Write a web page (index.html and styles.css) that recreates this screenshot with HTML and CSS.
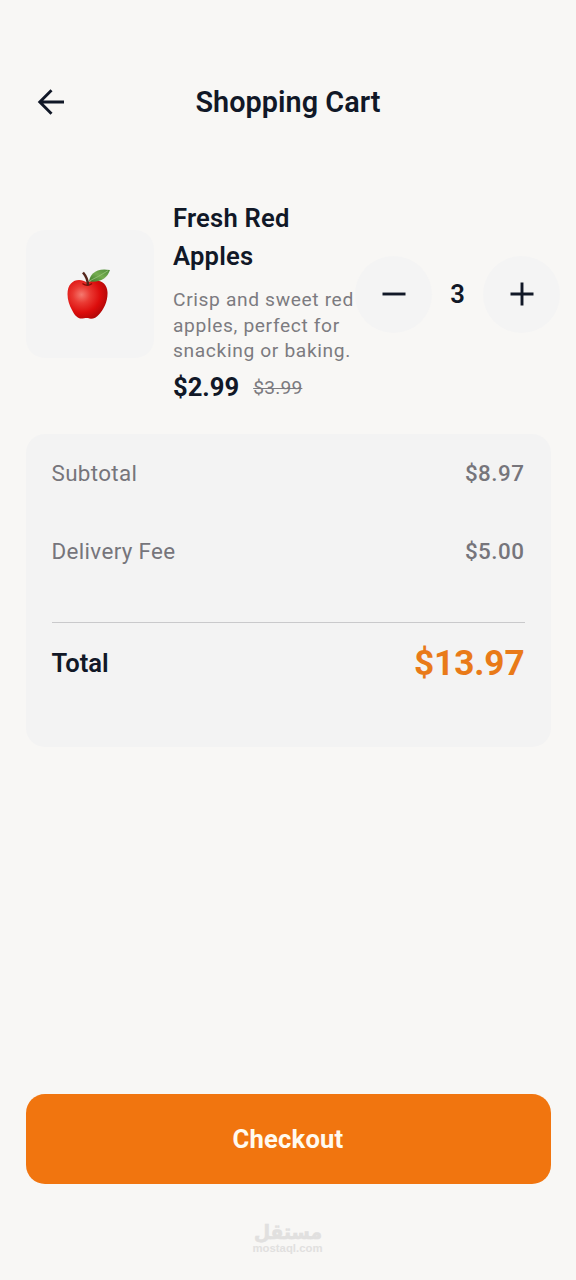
FILE: index.html
```html
<!DOCTYPE html>
<html lang="en">
<head>
<meta charset="utf-8">
<title>Shopping Cart</title>
<link rel="stylesheet" href="styles.css">
</head>
<body>
<main class="screen">
  <header class="topbar">
    <button class="back" aria-label="Back">
      <svg width="28" height="28" viewBox="0 0 28 28"><path d="M14.500 2.300 2.800 14 14.500 25.700M3 14H27" fill="none" stroke="currentColor" stroke-width="2.9"/></svg>
    </button>
    <h1 class="title">Shopping Cart</h1>
  </header>

  <section class="item">
    <div class="thumb">
      <svg width="46" height="52" viewBox="0 0 46 52">
        <defs>
          <radialGradient id="skin" cx=".35" cy=".38" r=".72">
            <stop offset="0" stop-color="#f5796f"/><stop offset=".3" stop-color="#ea3a33"/>
            <stop offset=".65" stop-color="#dc0d0c"/><stop offset="1" stop-color="#a80606"/>
          </radialGradient>
          <linearGradient id="leaf" x1="0" y1="1" x2="1" y2="0">
            <stop offset="0" stop-color="#3d7a2b"/><stop offset=".5" stop-color="#76ae50"/><stop offset="1" stop-color="#4d8a38"/>
          </linearGradient>
        </defs>
        <path d="M21 14.500C16 11 9 11 5 15.500C-.5 21 1 34 6 42C9 48 12 51 16.500 50.500C19 50 20 50 22 50C25 51.500 30 50.500 33 46.500C38 41 42 33 41.500 24C41 14 32 9.500 21 14.500Z" fill="url(#skin)"/>
        <path d="M16.500 15.500Q21.500 19 26 15.500" fill="none" stroke="#8c0906" stroke-width="1.500"/>
        <path d="M22 17.500C22 12 20 8 17 4.500" fill="none" stroke="#54251a" stroke-width="2.500"/>
        <path d="M23 13.500C24 6 30 -.5 44 2C41 10 36 14.500 23 13.500Z" fill="url(#leaf)"/>
        <path d="M24 12.700Q32 9 42 2.700" fill="none" stroke="#9bc57b" stroke-width=".8"/>
      </svg>
    </div>
    <div class="details">
      <h2 class="name">Fresh Red Apples</h2>
      <p class="desc">Crisp and sweet red apples, perfect for snacking or baking.</p>
      <div class="prices"><span class="price">$2.99</span><s class="was">$3.99</s></div>
    </div>
    <div class="stepper">
      <button class="round" aria-label="Decrease"><svg width="24" height="24" viewBox="0 0 24 24"><path d="M.5 12H23.500" stroke="currentColor" stroke-width="2.900"/></svg></button>
      <span class="count">3</span>
      <button class="round" aria-label="Increase"><svg width="24" height="24" viewBox="0 0 24 24"><path d="M.5 12H23.500M12 .5V23.500" stroke="currentColor" stroke-width="2.900"/></svg></button>
    </div>
  </section>

  <section class="summary">
    <div class="line"><span>Subtotal</span><span class="amount">$8.97</span></div>
    <div class="line"><span>Delivery Fee</span><span class="amount">$5.00</span></div>
    <div class="total"><span class="total-label">Total</span><span class="total-amount">$13.97</span></div>
  </section>

  <button class="checkout">Checkout</button>

  <footer class="mark">
    <svg width="84" height="44" viewBox="0 0 84 44">
      <text class="mark-ar" x="42" y="24" text-anchor="middle" direction="rtl" textLength="68" lengthAdjust="spacingAndGlyphs">مستقل</text>
      <text class="mark-en" x="6.500" y="37" textLength="70" lengthAdjust="spacingAndGlyphs">mostaql.com</text>
    </svg>
  </footer>
</main>
</body>
</html>
```
FILE: styles.css
```css
* { box-sizing: border-box; }
body { margin: 0; background: #f8f7f5; font-family: Roboto, "Liberation Sans", sans-serif; color: #111827; }
h1, h2, p { margin: 0; }
button { border: 0; padding: 0; font: inherit; color: inherit; }
svg { display: block; }
.screen { height: 1280px; padding: 63px 25.500px 0; display: flex; flex-direction: column; }
.topbar { height: 78px; display: grid; grid-template-columns: 51px 1fr 51px; align-items: center; }
.back { background: none; height: 52px; display: grid; place-items: center; }
.title { font-size: 28.8px; font-weight: 600; text-align: center; letter-spacing: .05px; }
.item { margin-top: 58px; display: flex; align-items: flex-start; width: 535px; }
.thumb { width: 128px; height: 128px; margin: 31px 19.500px 0 0; flex: none; border-radius: 19px; background: #f4f4f4; display: grid; place-items: center; }
.thumb svg { margin-right: 2px; }
.details { width: 182px; flex: none; }
.name { width: 150px; font-size: 25.6px; line-height: 38.4px; font-weight: 600; letter-spacing: .2px; }
.desc { margin-top: 11px; width: 186px; font-size: 19.2px; line-height: 25.8px; letter-spacing: .64px; color: #7c7b80; }
.prices { display: flex; align-items: center; gap: 14px; margin-top: 4px; height: 38px; }
.price { font-size: 25.6px; font-weight: 700; }
.was { font-size: 19.2px; letter-spacing: .2px; color: #7c7b80; text-decoration-thickness: 1.3px; }
.stepper { margin-top: 56.500px; display: flex; align-items: center; flex: none; }
.round { width: 77px; height: 77px; border-radius: 50%; background: #f4f4f4; display: grid; place-items: center; }
.count { width: 51px; text-align: center; font-size: 25.6px; font-weight: 600; }
.summary { margin-top: 28px; height: 313px; flex: none; padding: 0 26px; border-radius: 19px; background: #f3f3f3; }
.line { height: 77.600px; display: flex; justify-content: space-between; align-items: center; font-size: 22.4px; letter-spacing: .35px; color: #76757b; }
.amount { font-weight: 500; letter-spacing: .5px; }
.total { margin-top: 32.500px; border-top: 1.6px solid #c9c9cb; height: 81px; display: flex; justify-content: space-between; align-items: center; }
.total-label { font-size: 25.6px; font-weight: 600; }
.total-amount { font-size: 35.2px; font-weight: 700; letter-spacing: -.1px; color: #e97a18; }
.checkout { margin-top: 347px; height: 90px; flex: none; border-radius: 19px; background: #f1750f; color: #fffaf0; font-size: 25.6px; font-weight: 700; letter-spacing: .2px; }
.mark { margin-top: 31px; display: flex; justify-content: center; }
.mark-ar { font: 700 20px "DejaVu Sans", sans-serif; fill: #e1e0df; stroke: #e1e0df; stroke-width: .6px; }
.mark-en { font: 700 11px "Liberation Sans", sans-serif; fill: #e1e0df; }
```
